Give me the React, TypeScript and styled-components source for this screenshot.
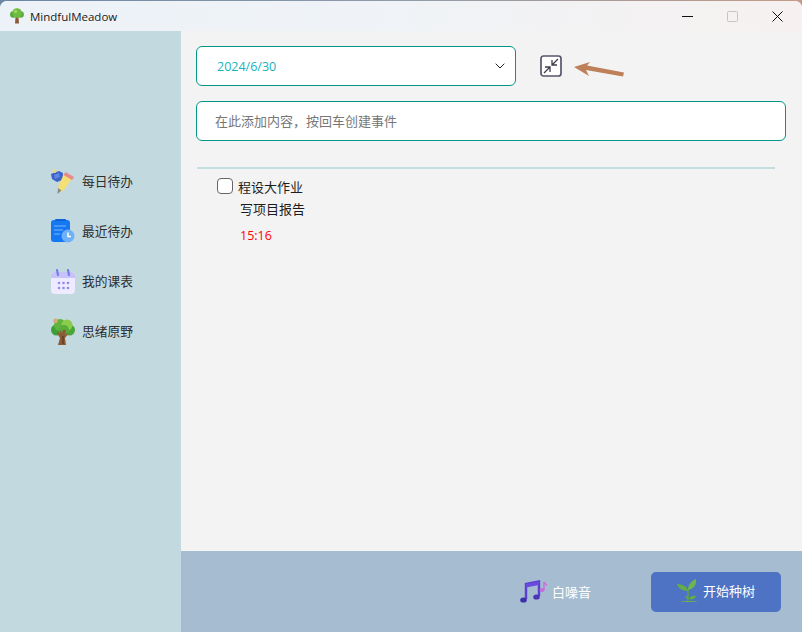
import React from 'react'
import styled, { createGlobalStyle } from 'styled-components'

const GlobalStyle = createGlobalStyle`
  html, body {
    margin: 0;
    padding: 0;
    width: 802px;
    height: 632px;
    overflow: hidden;
    background: #5b7a99;
    font-family: "Noto Sans CJK SC", "Liberation Sans", sans-serif;
  }
  * { box-sizing: border-box; }
`

const Wrapper = styled.div`
  width: 802px;
  height: 632px;
  display: flex;
  flex-direction: column;
  background: linear-gradient(90deg, #6b87a3 0%, #8f9cab 50%, #c49a86 100%);
  padding-top: 1px;
`
const Window = styled.div`
  flex: 1;
  min-height: 0;
  display: flex;
  flex-direction: column;
  border-radius: 7px 7px 0 0;
  overflow: hidden;
  background: #f3f3f3;
`
const TitleBar = styled.div`
  height: 30px;
  display: flex;
  align-items: center;
  background: linear-gradient(90deg, #edf2f8 0%, #eff3f7 45%, #f6f1f0 100%);
  padding: 0 2px 0 10px;
`
const AppName = styled.span`
  margin-left: 6px;
  font-family: "Open Sans", "Liberation Sans", sans-serif;
  font-size: 11.5px;
  color: #1a1a1a;
  flex: 1;
`
const WinButton = styled.div`
  width: 45px;
  height: 30px;
  display: flex;
  align-items: center;
  justify-content: center;
`
const Body = styled.div`
  flex: 1;
  min-height: 0;
  display: flex;
`
const Sidebar = styled.nav`
  width: 181px;
  background: #c3d9e0;
  display: flex;
  flex-direction: column;
  padding: 132px 0 0 51px;
  gap: 14px;
`
const NavItem = styled.div`
  height: 36px;
  display: flex;
  align-items: center;
  gap: 7px;
  font-size: 12.75px;
  color: #2e2e2e;
`
const NavIcon = styled.span`
  width: 24px;
  flex-shrink: 0;
  display: flex;
  justify-content: center;
`
const NavLabel = styled.span`
  padding-bottom: 1px;
`
const Main = styled.div`
  flex: 1;
  min-width: 0;
  display: flex;
  flex-direction: column;
`
const Content = styled.div`
  flex: 1;
  min-height: 0;
  padding: 15px 16px 0 15px;
`
const TopRow = styled.div`
  display: flex;
  align-items: center;
`
const DateSelect = styled.div`
  width: 320px;
  height: 40px;
  border: 1px solid #009688;
  border-radius: 6px;
  background: #fff;
  display: flex;
  align-items: center;
  justify-content: space-between;
  padding: 0 10px 0 20px;
  font-family: "Open Sans", "Liberation Sans", sans-serif;
  font-size: 12.5px;
  color: #17b3c1;
`
const CompactButton = styled.div`
  margin-left: 24px;
  display: flex;
`
const ArrowMark = styled.div`
  margin: 9px 0 0 11px;
  display: flex;
`
const EventInput = styled.input`
  display: block;
  width: 590px;
  height: 40px;
  margin-top: 15px;
  border: 1px solid #009688;
  border-radius: 6px;
  background: #fff;
  padding: 0 18px 2px;
  font-family: "Noto Sans CJK SC", sans-serif;
  font-size: 13px;
  outline: none;
  &::placeholder {
    color: #777;
    opacity: 1;
  }
`
const Divider = styled.div`
  height: 2px;
  width: 578px;
  margin: 26px 0 0 1px;
  background: #c3dde0;
`
const Todo = styled.div`
  padding: 8px 0 0 21px;
`
const TodoHead = styled.label`
  display: flex;
  align-items: center;
  gap: 5px;
  font-size: 13px;
  color: #1c1c1c;
  height: 18px;
`
const Box = styled.span`
  width: 16px;
  height: 16px;
  border: 1px solid #666;
  border-radius: 4px;
  background: #fff;
`
const TodoNote = styled.div`
  margin: 5px 0 0 23px;
  font-size: 13px;
  line-height: 18px;
  color: #1c1c1c;
`
const TodoTime = styled.div`
  margin: 9px 0 0 23px;
  font-family: "Open Sans", "Liberation Sans", sans-serif;
  font-size: 12.5px;
  line-height: 18px;
  color: #f00;
`
const Footer = styled.div`
  height: 81px;
  background: #a6bcd0;
  display: flex;
  align-items: center;
  justify-content: flex-end;
  padding-right: 21px;
`
const NoiseButton = styled.div`
  display: flex;
  align-items: center;
  gap: 4px;
  margin-right: 60px;
  font-size: 13px;
  line-height: 18px;
  color: #fff;
`
const PlantButton = styled.div`
  width: 130px;
  height: 40px;
  border-radius: 5px;
  background: #4e72c4;
  display: flex;
  align-items: center;
  justify-content: center;
  gap: 2px;
  padding-bottom: 1px;
  font-size: 13px;
  line-height: 18px;
  color: #fff;
`

const SmallTree = () => (
  <svg width="14" height="16" viewBox="0 0 14 16">
    <path d="M5.500 9h3l.5 6.500H5z" fill="#8a5a3a" />
    <circle cx="3.300" cy="6.500" r="3.200" fill="#4ea83a" />
    <circle cx="10.700" cy="6.500" r="3.200" fill="#58ad38" />
    <circle cx="7" cy="5" r="4.800" fill="#6dbb41" />
    <circle cx="5.500" cy="3.500" r="1.800" fill="#9ad664" />
  </svg>
)

const MeadowTree = () => (
  <svg width="24" height="28" viewBox="0 0 24 28">
    <circle cx="5.500" cy="13" r="5.500" fill="#3f9f34" />
    <circle cx="18.500" cy="13" r="5.500" fill="#4aa638" />
    <circle cx="9" cy="8" r="6" fill="#5fb43e" />
    <circle cx="16" cy="8" r="5.500" fill="#8ccc4d" />
    <circle cx="13" cy="13" r="5" fill="#57ac3a" />
    <path d="M9 13l2 3 1-3h3l-1 5 2-2 1 1-3 4 1 7H7l2-7-3-5 1-1 2 2z" fill="#8b5a37" />
    <path d="M11 19h2v8h-2z" fill="#6e4529" />
    <path d="M2 3l3-2 2 2-1 3-3 0z" fill="#d9a878" />
  </svg>
)

const PencilIcon = () => (
  <svg width="24" height="25" viewBox="0 0 24 25">
    <path d="M0 5l8-3 4 2-.5 7-5.500 2-5-3z" fill="#3d63c8" />
    <path d="M3 6l5-2 1 4-5 2z" fill="#5f86e0" />
    <circle cx="3.500" cy="2" r="2" fill="#ecd987" />
    <path d="M13 5l8 4.500-8 11.500-6 3 .5-7.500z" fill="#f3df74" />
    <path d="M14.500 3l8.500 5-2 3-8.500-5z" fill="#e98a8a" />
    <path d="M7 19l3.500 2.500L6.500 25z" fill="#8a8a8a" />
  </svg>
)

const ClipboardIcon = () => (
  <svg width="24" height="24" viewBox="0 0 24 24">
    <rect x="0" y="1" width="19" height="22" rx="3" fill="#1677f2" />
    <rect x="4" y="0" width="11" height="2" rx="1" fill="#0d62d8" />
    <path d="M3 7h12M3 11h9M3 15h6" stroke="#5aa2f7" strokeWidth="1.400" />
    <circle cx="17" cy="17" r="6.500" fill="#6fb1f8" />
    <path d="M17 13.500V17.500h3" stroke="#fff" strokeWidth="1.500" fill="none" />
  </svg>
)

const CalendarIcon = () => (
  <svg width="24" height="25" viewBox="0 0 24 25">
    <rect x="0" y="3" width="24" height="22" rx="4" fill="#eeeaff" />
    <path d="M0 7a4 4 0 0 1 4-4h16a4 4 0 0 1 4 4v2H0z" fill="#c5c3fa" />
    <path d="M6 1l1 5M17 1l1 5" stroke="#7b7ee6" strokeWidth="2.200" strokeLinecap="round" />
    <g fill="#8d8cec">
      <circle cx="8" cy="14" r="1.300" /><circle cx="12.500" cy="14" r="1.300" /><circle cx="17" cy="14" r="1.300" />
      <circle cx="8" cy="19" r="1.300" /><circle cx="12.500" cy="19" r="1.300" /><circle cx="17" cy="19" r="1.300" />
    </g>
  </svg>
)

const MusicIcon = () => (
  <svg width="28" height="24" viewBox="0 0 28 24">
    <path d="M6 19V4l13-2.500V16" stroke="#5b3fd0" strokeWidth="2.400" fill="none" />
    <path d="M6 4l13-2.500V5L6 7.500z" fill="#6a4ae0" />
    <ellipse cx="3.500" cy="20" rx="3.300" ry="2.600" fill="#3d2fa8" />
    <ellipse cx="16.500" cy="17" rx="3.300" ry="2.600" fill="#4a35b8" />
    <path d="M24 2v8" stroke="#c86bd8" strokeWidth="1.400" />
    <path d="M24 2c1 2 2.500 2 3 3.500" stroke="#c86bd8" strokeWidth="1.200" fill="none" />
    <ellipse cx="22" cy="10" rx="2.500" ry="2" fill="#c86bd8" />
  </svg>
)

const SproutIcon = () => (
  <svg width="24" height="24" viewBox="0 0 24 24">
    <path d="M1 23c6-1.500 16-1.500 22 0z" fill="#6fae4e" />
    <path d="M11 22V10" stroke="#5ea843" strokeWidth="1.400" />
    <path d="M11 12C5 12 1 9 0 5c5 0 10 2 11 7z" fill="#62ad45" />
    <path d="M11 11c0-5 3-9 8-11 1 5-2 10-8 11z" fill="#6cb74b" />
    <path d="M12 20c1-3 4-4 7-3-1 3-4 4-7 3z" fill="#62ad45" />
    <path d="M12 20c-1-2-2-3-4-3 0 2 2 3 4 3z" fill="#62ad45" />
  </svg>
)

const navItems = [
  { label: '每日待办', icon: <PencilIcon /> },
  { label: '最近待办', icon: <ClipboardIcon /> },
  { label: '我的课表', icon: <CalendarIcon /> },
  { label: '思绪原野', icon: <MeadowTree /> },
]

export default function App() {
  return (
    <Wrapper>
      <GlobalStyle />
      <Window>
        <TitleBar>
          <SmallTree />
          <AppName>MindfulMeadow</AppName>
          <WinButton>
            <svg width="11" height="11" viewBox="0 0 11 11"><path d="M0 5.500h11" stroke="#111" /></svg>
          </WinButton>
          <WinButton>
            <svg width="11" height="11" viewBox="0 0 11 11"><rect x=".5" y=".5" width="10" height="10" rx="1" fill="none" stroke="#c4c4c4" /></svg>
          </WinButton>
          <WinButton>
            <svg width="11" height="11" viewBox="0 0 11 11"><path d="M.5.5l10 10M10.500.5l-10 10" stroke="#111" /></svg>
          </WinButton>
        </TitleBar>
        <Body>
          <Sidebar>
            {navItems.map((item) => (
              <NavItem key={item.label}>
                <NavIcon>{item.icon}</NavIcon>
                <NavLabel>{item.label}</NavLabel>
              </NavItem>
            ))}
          </Sidebar>
          <Main>
            <Content>
              <TopRow>
                <DateSelect>
                  <span>2024/6/30</span>
                  <svg width="10" height="6" viewBox="0 0 10 6"><path d="M.7.7L5 5l4.300-4.300" fill="none" stroke="#222" strokeWidth="1" /></svg>
                </DateSelect>
                <CompactButton>
                  <svg width="22" height="22" viewBox="0 0 22 22">
                    <rect x="1" y="1" width="20" height="20" rx="2.500" fill="#fff" stroke="#55566a" strokeWidth="1.700" />
                    <path d="M18 4l-6 6M12 5v5h5M4 18l6-6M5 12h5v5" fill="none" stroke="#3e3e4e" strokeWidth="1.300" />
                  </svg>
                </CompactButton>
                <ArrowMark>
                  <svg width="52" height="18" viewBox="0 0 52 18">
                    <path d="M1 5L17 0l-3 3.500 37 7-1 4L13 8l3 6z" fill="#bd8058" />
                  </svg>
                </ArrowMark>
              </TopRow>
              <EventInput placeholder={'在此添加内容\uFF0C按回车创建事件'} />
              <Divider />
              <Todo>
                <TodoHead>
                  <Box />
                  程设大作业
                </TodoHead>
                <TodoNote>写项目报告</TodoNote>
                <TodoTime>15:16</TodoTime>
              </Todo>
            </Content>
            <Footer>
              <NoiseButton>
                <MusicIcon />
                白噪音
              </NoiseButton>
              <PlantButton>
                <SproutIcon />
                开始种树
              </PlantButton>
            </Footer>
          </Main>
        </Body>
      </Window>
    </Wrapper>
  )
}
